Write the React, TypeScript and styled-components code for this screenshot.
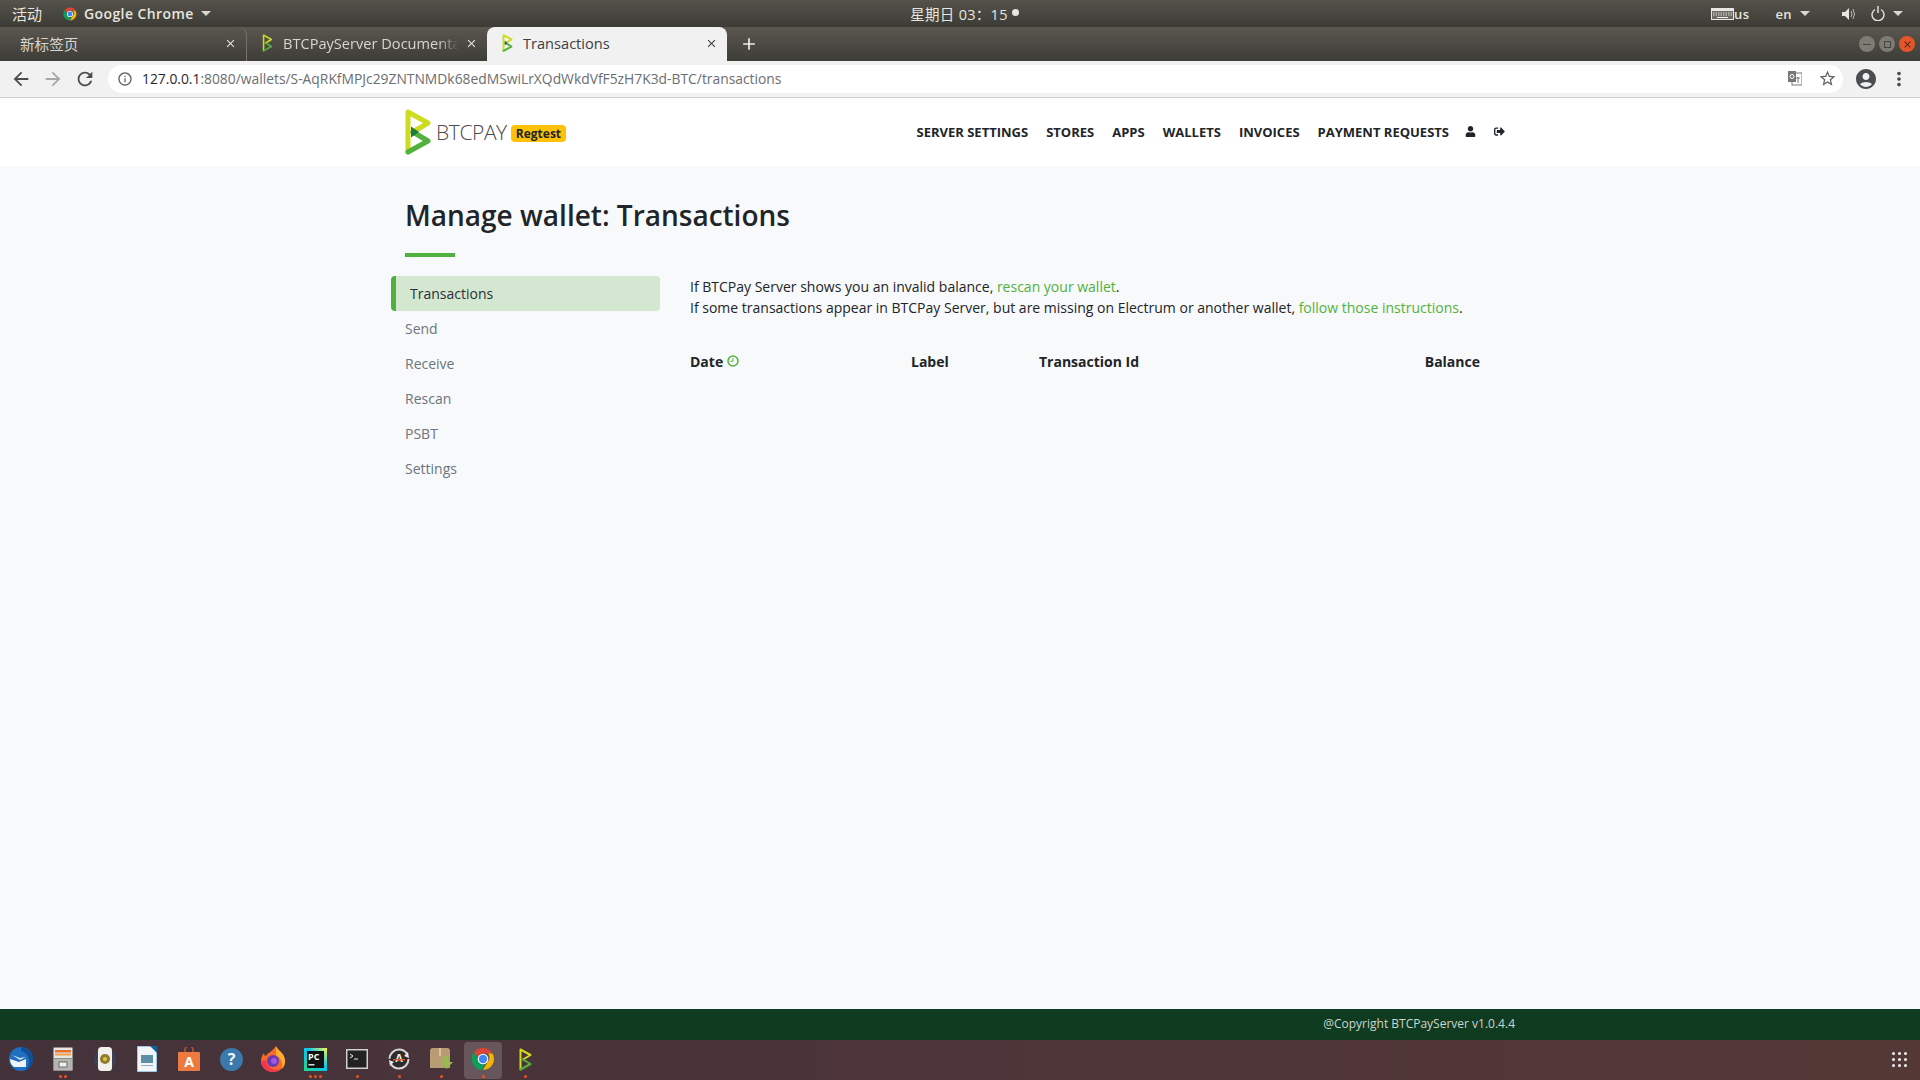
import styled, { createGlobalStyle } from "styled-components";
import { FaSignOutAlt, FaUser } from "react-icons/fa";
import {
  MdArrowBack,
  MdArrowForward,
  MdInfoOutline,
  MdMoreVert,
  MdRefresh,
  MdStarBorder,
  MdAccountCircle,
  MdClose,
  MdAdd,
} from "react-icons/md";

const GlobalStyle = createGlobalStyle`
  html, body { margin: 0; padding: 0; height: 100%; overflow: hidden; }
  * { box-sizing: border-box; }
  body { font-family: "Open Sans", "Noto Sans CJK SC", sans-serif; font-size: 14px; color: #212529; }
`;

const Screen = styled.div`
  display: flex;
  flex-direction: column;
  width: 1920px;
  height: 1080px;
  background: #f8f9fa;
`;

const TopBar = styled.div`
  display: grid;
  grid-template-columns: 1fr auto 1fr;
  align-items: center;
  height: 27px;
  padding: 0 17px 0 12px;
  background: linear-gradient(#55524b, #3c3b36);
  color: #e6e5df;
  font-size: 15px;
`;

const TopGroup = styled.div<{ $right?: boolean }>`
  display: flex;
  align-items: center;
  justify-content: ${(p) => (p.$right ? "flex-end" : "flex-start")};
`;

const ActivitiesLabel = styled.span`
  margin-right: 21px;
`;

const AppName = styled.span`
  margin-left: 7px;
  font-weight: 600;
  font-size: 14px;
  letter-spacing: 0.4px;
`;

const Caret = styled.span<{ $ml?: number }>`
  width: 0;
  height: 0;
  margin-left: ${(p) => p.$ml ?? 6}px;
  border-left: 5px solid transparent;
  border-right: 5px solid transparent;
  border-top: 5px solid #d8d7d2;
`;

const Clock = styled.div`
  display: flex;
  align-items: center;
  gap: 4px;
  margin-left: 14px;
  font-size: 14.5px;
  letter-spacing: 0.3px;
`;

const ClockDot = styled.span`
  width: 7px;
  height: 7px;
  margin-bottom: 3px;
  border-radius: 50%;
  background: #e6e5df;
`;

const TrayLabel = styled.span<{ $ml?: number }>`
  display: flex;
  margin-left: ${(p) => p.$ml ?? 0}px;
  font-size: 13px;
  font-weight: 600;
  letter-spacing: 0.4px;
`;

const TabStrip = styled.div`
  display: flex;
  align-items: flex-end;
  height: 34px;
  background: linear-gradient(#5a574f, #3d3c37);
`;

const Tab = styled.div<{ $active?: boolean; $width: number; $divider?: boolean; $pad?: number }>`
  display: flex;
  align-items: center;
  gap: 10px;
  width: ${(p) => p.$width}px;
  height: 34px;
  padding: 0 9px 2px ${(p) => p.$pad ?? 15}px;
  border-radius: 8px 8px 0 0;
  background: ${(p) => (p.$active ? "#f1f1f1" : "transparent")};
  color: ${(p) => (p.$active ? "#3c4043" : "#d6d5cf")};
  font-size: 14.6px;
  border-right: ${(p) => (p.$divider ? "1px solid #75736b" : "0")};
`;

const TabTitle = styled.span<{ $fade?: boolean }>`
  flex: 1;
  overflow: hidden;
  white-space: nowrap;
  ${(p) => p.$fade && "margin-right: -4px; mask-image: linear-gradient(to right, #000 88%, transparent);"}
`;

const PlusButton = styled.div`
  display: flex;
  align-items: center;
  justify-content: center;
  width: 44px;
  height: 34px;
  color: #eeeeea;
  font-size: 20px;
`;

const WindowButtons = styled.div`
  display: flex;
  align-items: center;
  gap: 4px;
  height: 34px;
  margin-left: auto;
  padding-right: 5px;
`;

const WindowButton = styled.div<{ $close?: boolean }>`
  display: flex;
  align-items: center;
  justify-content: center;
  width: 16px;
  height: 16px;
  border-radius: 50%;
  background: ${(p) => (p.$close ? "#e2562a" : "#7d7b73")};
  color: ${(p) => (p.$close ? "#5b2310" : "#45443f")};
  font-size: 11px;
`;

const MaximizeGlyph = styled.span`
  width: 7px;
  height: 7px;
  border: 1px solid #45443f;
`;

const MinimizeGlyph = styled.span`
  width: 8px;
  height: 1px;
  background: #45443f;
`;

const Toolbar = styled.div`
  display: flex;
  align-items: center;
  height: 37px;
  padding: 0 0 1px 5px;
  background: #f1f1f1;
  border-bottom: 1px solid #cfcfcf;
`;

const ToolButton = styled.div<{ $muted?: boolean; $width?: number; $size?: number }>`
  display: flex;
  align-items: center;
  justify-content: center;
  width: ${(p) => p.$width ?? 32}px;
  color: ${(p) => (p.$muted ? "#a5a7aa" : "#4a4d50")};
  font-size: ${(p) => p.$size ?? 22}px;
`;

const Omnibox = styled.div`
  display: flex;
  align-items: center;
  width: 1735px;
  height: 28px;
  margin: 0 11px 0 7px;
  padding: 0 0 0 9px;
  border-radius: 14px;
  background: #fff;
`;

const UrlText = styled.div`
  flex: 1;
  margin-left: 9px;
  color: #6b6e72;
  font-size: 13.85px;
  white-space: nowrap;
`;

const UrlHost = styled.span`
  color: #26282b;
`;

const OmniIcon = styled.div`
  display: flex;
  align-items: center;
  justify-content: center;
  width: 32px;
  color: #5f6368;
  font-size: 19px;
`;

const Page = styled.div`
  flex: 1;
  display: flex;
  flex-direction: column;
`;

const NavBar = styled.nav`
  height: 68px;
  background: #fff;
`;

const Container = styled.div`
  width: 1140px;
  margin: 0 auto;
  padding: 0 15px;
`;

const NavInner = styled(Container)`
  display: flex;
  align-items: center;
  justify-content: space-between;
  height: 68px;
`;

const Brand = styled.div`
  display: flex;
  align-items: center;
`;

const BrandName = styled.span`
  margin-left: 5px;
  color: #4a4a4a;
  font-size: 21px;
  font-weight: 300;
  letter-spacing: -0.4px;
`;

const EnvBadge = styled.span`
  margin: 2px 0 0 4px;
  padding: 1px 5px;
  border-radius: 4px;
  background: #ffc107;
  color: #212529;
  font-size: 12px;
  font-weight: 700;
  line-height: 15px;
`;

const NavLinks = styled.div`
  display: flex;
  align-items: center;
  gap: 18px;
  margin-top: -1px;
  padding-right: 10px;
`;

const NavLink = styled.a`
  color: #212529;
  font-size: 13px;
  font-weight: 700;
  text-transform: uppercase;
  white-space: nowrap;
`;

const NavIcon = styled.span<{ $ml?: number }>`
  display: flex;
  margin-left: ${(p) => p.$ml ?? 0}px;
  color: #212529;
  font-size: 11px;
`;

const Main = styled(Container)`
  flex: 1;
  padding-top: 30px;
`;

const Title = styled.h1`
  margin: 0;
  color: #212529;
  font-size: 28px;
  font-weight: 600;
  line-height: 38px;
`;

const TitleRule = styled.hr`
  width: 50px;
  height: 4px;
  margin: 19px 0;
  border: 0;
  background: #51b13e;
`;

const Columns = styled.div`
  display: grid;
  grid-template-columns: 285px 1fr;
  margin: 0 -15px;
`;

const SideMenu = styled.div`
  display: flex;
  flex-direction: column;
  width: 270px;
  padding-left: 1px;
`;

const SideItem = styled.a<{ $active?: boolean }>`
  display: flex;
  align-items: center;
  height: 35px;
  padding-left: 14px;
  border-left: ${(p) => (p.$active ? "5px solid #51b13e" : "0")};
  border-radius: 4px;
  background: ${(p) => (p.$active ? "#d4e7d1" : "transparent")};
  color: ${(p) => (p.$active ? "#2b3035" : "#6c757d")};
  font-size: 14px;
`;

const Content = styled.div`
  padding: 0 50px 0 15px;
`;

const Notice = styled.p`
  margin: 0 0 31px;
  color: #212529;
  font-size: 14px;
  line-height: 21px;
  white-space: nowrap;
`;

const GreenLink = styled.a`
  color: #51b13e;
`;

const TableHead = styled.div`
  display: grid;
  grid-template-columns: 221px 128px 1fr auto;
  align-items: center;
  height: 24px;
  font-size: 14px;
  font-weight: 700;
`;

const DateCell = styled.div`
  display: flex;
  align-items: center;
  gap: 4px;
`;

const Footer = styled.footer`
  height: 31px;
  background: #0f3b21;
`;

const FooterInner = styled(Container)`
  display: flex;
  align-items: center;
  justify-content: flex-end;
  height: 31px;
  padding-bottom: 2px;
  color: #cdd6cf;
  font-size: 12px;
`;

const Dock = styled.div`
  display: flex;
  align-items: center;
  height: 40px;
  background: linear-gradient(to right, #44323a, #4d3539 50%, #543836);
`;

const DockItem = styled.div<{ $active?: boolean }>`
  position: relative;
  display: flex;
  align-items: center;
  justify-content: center;
  width: 42px;
  height: 40px;
  padding-bottom: 2px;
  &::before {
    content: "";
    display: ${(p) => (p.$active ? "block" : "none")};
    position: absolute;
    top: 2px;
    left: 2px;
    right: 2px;
    bottom: 1px;
    border-radius: 4px;
    background: rgba(255, 255, 255, 0.17);
  }
  svg {
    position: relative;
  }
`;

const RunDots = styled.div`
  position: absolute;
  left: 0;
  right: 0;
  bottom: 2px;
  display: flex;
  justify-content: center;
  gap: 2px;
`;

const RunDot = styled.span`
  width: 3px;
  height: 3px;
  border-radius: 50%;
  background: #e95420;
`;

const AppGrid = styled.div`
  display: grid;
  grid-template-columns: repeat(3, 3px);
  gap: 3px;
  margin-left: auto;
  margin-right: 13px;
  padding-bottom: 1px;
`;

const GridDot = styled.span`
  width: 3px;
  height: 3px;
  border-radius: 50%;
  background: #f4f1f0;
`;

const ChromeLogo = ({ size }: { size: number }) => (
  <svg width={size} height={size} viewBox="0 0 24 24">
    <path d="M12 1a11 11 0 0 1 9.5 5.5H12a5.5 5.5 0 0 0-5.2 3.7L3.2 5A11 11 0 0 1 12 1z" fill="#db4437" />
    <path d="M21.5 6.5A11 11 0 0 1 12 23l4.7-8.2a5.5 5.5 0 0 0 0-8.3z" fill="#f4b400" />
    <path d="M12 23A11 11 0 0 1 3.2 5l4.7 8.8a5.5 5.5 0 0 0 6 3.6z" fill="#0f9d58" />
    <circle cx="12" cy="12" r="5.3" fill="#fff" />
    <circle cx="12" cy="12" r="4.2" fill="#4285f4" />
  </svg>
);

const BtcpayMark = ({ width, height, thin }: { width: number; height: number; thin?: boolean }) => (
  <svg width={width} height={height} viewBox="0 0 26 46" fill="none">
    <path d="M3 43V3L23 14L8 23" stroke="#cedc21" strokeWidth={thin ? 4 : 5} strokeLinejoin="round" strokeLinecap="round" />
    <path d="M3 43L23 32L8 23" stroke="#51b13e" strokeWidth={thin ? 4 : 5} strokeLinejoin="round" strokeLinecap="round" />
    {!thin && <path d="M6 17.5L14 23L6 28.5z" fill="#1e7a44" />}
  </svg>
);

const ThunderbirdIcon = () => (
  <svg width="26" height="26" viewBox="0 0 26 26">
    <circle cx="13" cy="13" r="12" fill="#1f6fc0" />
    <path d="M13 1a12 12 0 0 1 12 12c0 6-4 11-9 12 4-3 6-7 5-12-1-4-4-7-8-8z" fill="#134f96" />
    <path d="M2 13l9 3 7-3v8H6c-3-2-4-5-4-8z" fill="#f1f3f6" />
    <path d="M4 9l8 5 6-3-6 1z" fill="#dfe5ec" />
  </svg>
);

const FilesIcon = () => (
  <svg width="20" height="24" viewBox="0 0 20 24">
    <rect width="20" height="24" rx="1.5" fill="#8f8f8c" />
    <rect x="1" y="1" width="18" height="10" fill="#e9e6e1" />
    <rect x="2" y="3" width="16" height="2.5" fill="#e96f35" />
    <rect x="2" y="6.5" width="16" height="2" fill="#f0a04f" />
    <rect x="1" y="12" width="18" height="11" fill="#b4b4b1" />
    <rect x="6" y="15" width="8" height="5" fill="#eee" stroke="#555" strokeWidth=".8" />
  </svg>
);

const RhythmboxIcon = () => (
  <svg width="22" height="24" viewBox="0 0 22 24">
    <circle cx="11" cy="12" r="11" fill="#3f3f55" />
    <rect x="4" y="0" width="14" height="24" rx="3.5" fill="#f1f0ea" />
    <circle cx="11" cy="12" r="5" fill="#8f7c2e" />
    <circle cx="11" cy="12" r="2" fill="#e0c74b" />
  </svg>
);

const WriterIcon = () => (
  <svg width="20" height="26" viewBox="0 0 20 26">
    <path d="M0 0h14l6 6v20H0z" fill="#f2f6f9" stroke="#4f9bcf" />
    <path d="M13 0h7v7z" fill="#14609d" />
    <rect x="4" y="9" width="12" height="8" fill="#5d8fa8" />
    <rect x="4" y="19" width="12" height="1" fill="#9ab" />
  </svg>
);

const SoftwareIcon = () => (
  <svg width="22" height="24" viewBox="0 0 22 24">
    <path d="M7 6V3a3 3 0 0 1 8 0v3" fill="none" stroke="#b9552c" strokeWidth="1.6" />
    <rect y="5" width="22" height="19" rx="1" fill="#ed7a3f" />
    <text x="11" y="20" textAnchor="middle" fontFamily="Open Sans" fontWeight="700" fontSize="14" fill="#fff">A</text>
  </svg>
);

const HelpIcon = () => (
  <svg width="23" height="23" viewBox="0 0 23 23">
    <circle cx="11.5" cy="11.5" r="11.5" fill="#3b78ab" />
    <text x="11.5" y="17" textAnchor="middle" fontFamily="Open Sans" fontWeight="700" fontSize="16" fill="#f2f6fa">?</text>
  </svg>
);

const FirefoxIcon = () => (
  <svg width="24" height="26" viewBox="0 0 24 26">
    <path d="M15 0c1 4 9 7 9 15a12 11 0 0 1-24 0c0-3 1-6 3-8 0 2 1 3 2 3 1-3 6-4 10-10z" fill="#f56a2c" />
    <path d="M15 0c1 4 9 7 9 15 0 3-1 6-3 8 1-6-1-11-6-14z" fill="#ffb02e" />
    <circle cx="12" cy="15" r="6" fill="#6b3ab0" />
    <circle cx="13" cy="15" r="3" fill="#a05ae0" />
    <path d="M0 15a12 11 0 0 0 20 8c-6 2-14 0-15-9z" fill="#f0374f" />
  </svg>
);

const PycharmIcon = () => (
  <svg width="23" height="23" viewBox="0 0 23 23">
    <defs>
      <linearGradient id="pc" x1="0" y1="1" x2="1" y2="0">
        <stop offset="0" stopColor="#21d789" />
        <stop offset="0.55" stopColor="#07c3f2" />
        <stop offset="1" stopColor="#fcf84a" />
      </linearGradient>
    </defs>
    <rect width="23" height="23" fill="url(#pc)" />
    <rect x="3" y="3" width="17" height="17" fill="#111" />
    <text x="4" y="12" fontFamily="Open Sans" fontWeight="700" fontSize="9" fill="#fff">PC</text>
    <rect x="4.5" y="16" width="6" height="1.5" fill="#ddd" />
  </svg>
);

const TerminalIcon = () => (
  <svg width="22" height="20" viewBox="0 0 22 20">
    <rect width="22" height="20" fill="#cfcfcf" />
    <rect x="1.5" y="1.5" width="19" height="17" fill="#222" />
    <path d="M4 5l3 2-3 2" fill="none" stroke="#eee" strokeWidth="1" />
    <path d="M8 10h4" stroke="#eee" strokeWidth="1" />
  </svg>
);

const UpdaterIcon = () => (
  <svg width="24" height="24" viewBox="0 0 24 24">
    <circle cx="12" cy="12" r="9.5" fill="#2e2b2d" stroke="#d8d8d8" strokeWidth="2" strokeDasharray="24 6" />
    <path d="M21 5l1 6-5-2zM3 19l-1-6 5 2z" fill="#e8e8e8" />
    <text x="12" y="15" textAnchor="middle" fontFamily="Open Sans" fontWeight="700" fontSize="11" fill="#eee">A</text>
    <rect x="6" y="12" width="12" height="1.4" fill="#e95420" />
  </svg>
);

const ArchiveIcon = () => (
  <svg width="24" height="22" viewBox="0 0 24 22">
    <path d="M1 3Q1 0 4 0h14q3 0 3 3v17H1z" fill="#b99c74" />
    <rect x="10" y="0" width="2" height="8" fill="#d8c3a0" />
    <path d="M15 8h5v6h4l-6.5 7L11 14h4z" fill="#9ab752" />
  </svg>
);

const TranslateIcon = () => (
  <svg width="14" height="15" viewBox="0 0 14 15">
    <rect x="4" y="2" width="10" height="12" fill="#fff" stroke="#777" />
    <rect width="8" height="11" fill="#777" />
    <circle cx="4" cy="5.5" r="2" fill="none" stroke="#fff" />
    <path d="M8 7h4M10 6v6" stroke="#777" />
  </svg>
);

const KeyboardIcon = () => (
  <svg width="23" height="12" viewBox="0 0 23 12">
    <rect width="23" height="12" fill="#e8e7e2" />
    <rect x="1" y="3" width="21" height="8" fill="#6c6a63" />
    <path d="M2 5h19M2 7h19" stroke="#dedcd6" strokeDasharray="1.5 1" />
    <path d="M6 9.5h11" stroke="#f2f2f2" />
  </svg>
);

const SpeakerIcon = () => (
  <svg width="14" height="14" viewBox="0 0 14 14" fill="none">
    <path d="M0 5h3l4-4v12l-4-4H0z" fill="#e6e5df" />
    <path d="M9 4q2 3 0 6M11 2q3 5 0 10" stroke="#bdbcb6" />
  </svg>
);

const PowerIcon = () => (
  <svg width="14" height="15" viewBox="0 0 14 15" fill="none" stroke="#e6e5df" strokeWidth="1.4">
    <path d="M4 3.5a6 6 0 1 0 6 0" />
    <path d="M7 0v7" />
  </svg>
);

const ClockIcon = () => (
  <svg width="12" height="12" viewBox="0 0 12 12" fill="none" stroke="#51b13e">
    <circle cx="6" cy="6" r="5" strokeWidth="1.5" />
    <path d="M6 3v3.3H3.5" strokeWidth="1" />
  </svg>
);

const dockApps = [
  { key: "thunderbird", icon: <ThunderbirdIcon />, dots: 0 },
  { key: "files", icon: <FilesIcon />, dots: 2 },
  { key: "rhythmbox", icon: <RhythmboxIcon />, dots: 0 },
  { key: "writer", icon: <WriterIcon />, dots: 0 },
  { key: "software", icon: <SoftwareIcon />, dots: 0 },
  { key: "help", icon: <HelpIcon />, dots: 0 },
  { key: "firefox", icon: <FirefoxIcon />, dots: 0 },
  { key: "pycharm", icon: <PycharmIcon />, dots: 3 },
  { key: "terminal", icon: <TerminalIcon />, dots: 1 },
  { key: "updater", icon: <UpdaterIcon />, dots: 1 },
  { key: "archive", icon: <ArchiveIcon />, dots: 1 },
  { key: "chrome", icon: <ChromeLogo size={24} />, dots: 1, active: true },
  { key: "btcpay", icon: <BtcpayMark width={13} height={23} thin />, dots: 1 },
];

const navItems = ["Server Settings", "Stores", "Apps", "Wallets", "Invoices", "Payment Requests"];
const sideItems = ["Transactions", "Send", "Receive", "Rescan", "PSBT", "Settings"];

export default function App() {
  return (
    <Screen>
      <GlobalStyle />
      <TopBar>
        <TopGroup>
          <ActivitiesLabel>活动</ActivitiesLabel>
          <ChromeLogo size={14} />
          <AppName>Google Chrome</AppName>
          <Caret $ml={7} />
        </TopGroup>
        <Clock>
          星期日 03：15
          <ClockDot />
        </Clock>
        <TopGroup $right>
          <KeyboardIcon />
          <TrayLabel>us</TrayLabel>
          <TrayLabel $ml={26}>en</TrayLabel>
          <Caret $ml={8} />
          <TrayLabel $ml={32}>
            <SpeakerIcon />
          </TrayLabel>
          <TrayLabel $ml={15}>
            <PowerIcon />
          </TrayLabel>
          <Caret $ml={8} />
        </TopGroup>
      </TopBar>

      <TabStrip>
        <Tab $width={247} $divider $pad={20}>
          <TabTitle>新标签页</TabTitle>
          <MdClose size={13} color="#e6e5df" />
        </Tab>
        <Tab $width={240}>
          <BtcpayMark width={11} height={18} thin />
          <TabTitle $fade>BTCPayServer Documentation</TabTitle>
          <MdClose size={13} color="#e6e5df" />
        </Tab>
        <Tab $width={240} $active>
          <BtcpayMark width={11} height={18} />
          <TabTitle>Transactions</TabTitle>
          <MdClose size={13} color="#3c4043" />
        </Tab>
        <PlusButton>
          <MdAdd />
        </PlusButton>
        <WindowButtons>
          <WindowButton>
            <MinimizeGlyph />
          </WindowButton>
          <WindowButton>
            <MaximizeGlyph />
          </WindowButton>
          <WindowButton $close>
            <MdClose />
          </WindowButton>
        </WindowButtons>
      </TabStrip>

      <Toolbar>
        <ToolButton>
          <MdArrowBack />
        </ToolButton>
        <ToolButton $muted>
          <MdArrowForward />
        </ToolButton>
        <ToolButton>
          <MdRefresh />
        </ToolButton>
        <Omnibox>
          <MdInfoOutline size={16} color="#5f6368" />
          <UrlText>
            <UrlHost>127.0.0.1</UrlHost>:8080/wallets/S-AqRKfMPJc29ZNTNMDk68edMSwiLrXQdWkdVfF5zH7K3d-BTC/transactions
          </UrlText>
          <OmniIcon>
            <TranslateIcon />
          </OmniIcon>
          <OmniIcon>
            <MdStarBorder />
          </OmniIcon>
        </Omnibox>
        <ToolButton $width={24} $size={24}>
          <MdAccountCircle />
        </ToolButton>
        <ToolButton $width={42}>
          <MdMoreVert />
        </ToolButton>
      </Toolbar>

      <Page>
        <NavBar>
          <NavInner>
            <Brand>
              <BtcpayMark width={26} height={46} />
              <BrandName>BTCPAY</BrandName>
              <EnvBadge>Regtest</EnvBadge>
            </Brand>
            <NavLinks>
              {navItems.map((item) => (
                <NavLink key={item}>{item}</NavLink>
              ))}
              <NavIcon $ml={-2}>
                <FaUser />
              </NavIcon>
              <NavIcon>
                <FaSignOutAlt />
              </NavIcon>
            </NavLinks>
          </NavInner>
        </NavBar>

        <Main>
          <Title>Manage wallet: Transactions</Title>
          <TitleRule />
          <Columns>
            <SideMenu>
              {sideItems.map((item, i) => (
                <SideItem key={item} $active={i === 0}>
                  {item}
                </SideItem>
              ))}
            </SideMenu>
            <Content>
              <Notice>
                If BTCPay Server shows you an invalid balance, <GreenLink>rescan your wallet</GreenLink>.
                <br />
                If some transactions appear in BTCPay Server, but are missing on Electrum or another wallet,{" "}
                <GreenLink>follow those instructions</GreenLink>.
              </Notice>
              <TableHead>
                <DateCell>
                  Date
                  <ClockIcon />
                </DateCell>
                <div>Label</div>
                <div>Transaction Id</div>
                <div>Balance</div>
              </TableHead>
            </Content>
          </Columns>
        </Main>

        <Footer>
          <FooterInner>@Copyright BTCPayServer v1.0.4.4</FooterInner>
        </Footer>
      </Page>

      <Dock>
        {dockApps.map((app) => (
          <DockItem key={app.key} $active={app.active}>
            {app.icon}
            <RunDots>
              {Array.from({ length: app.dots }).map((_, i) => (
                <RunDot key={i} />
              ))}
            </RunDots>
          </DockItem>
        ))}
        <AppGrid>
          {Array.from({ length: 9 }).map((_, i) => (
            <GridDot key={i} />
          ))}
        </AppGrid>
      </Dock>
    </Screen>
  );
}
